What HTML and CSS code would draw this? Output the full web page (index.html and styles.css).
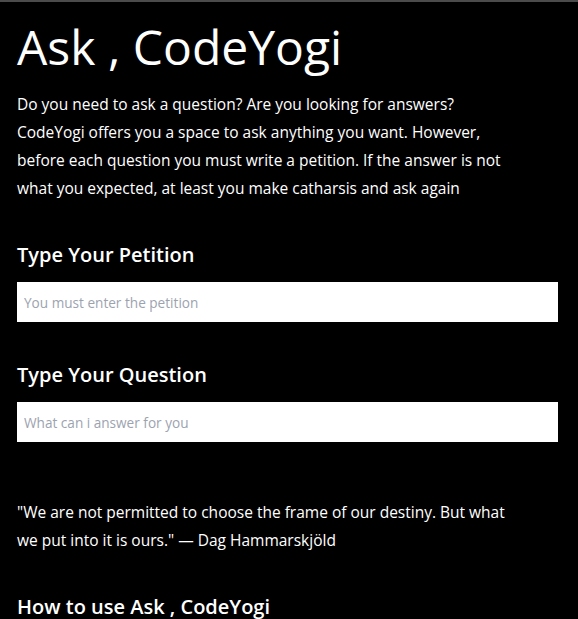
FILE: index.html
```html
<!DOCTYPE html>
<html lang="en">
<head>
<meta charset="utf-8">
<title>Ask , CodeYogi</title>
<link rel="stylesheet" href="styles.css">
</head>
<body>
<main class="page">
  <h1 class="title">Ask , CodeYogi</h1>
  <p class="text intro">Do you need to ask a question? Are you looking for answers? CodeYogi offers you a space to ask anything you want. However, before each question you must write a petition. If the answer is not what you expected, at least you make catharsis and ask again</p>
  <section class="field">
    <h2 class="label">Type Your Petition</h2>
    <input class="input" type="text" placeholder="You must enter the petition">
  </section>
  <section class="field">
    <h2 class="label">Type Your Question</h2>
    <input class="input" type="text" placeholder="What can i answer for you">
  </section>
  <p class="text quote">"We are not permitted to choose the frame of our destiny. But what we put into it is ours." — Dag Hammarskjöld</p>
  <h2 class="label">How to use Ask , CodeYogi</h2>
</main>
</body>
</html>
```
FILE: styles.css
```css
html, body {
  margin: 0;
  padding: 0;
  background: #000;
}
body {
  border-top: 2px solid #4b4b4b;
  font-family: "Open Sans", "Noto Sans", sans-serif;
  color: #fff;
}
.page {
  padding: 0 20px 0 17px;
  display: flex;
  flex-direction: column;
}
.title {
  margin: 13px 0 0;
  font-size: 48px;
  font-weight: 500;
  line-height: 64px;
}
.text {
  max-width: 498px;
  font-size: 15.5px;
  line-height: 28px;
}
.intro {
  margin: 11px 0 0;
}
.field {
  display: flex;
  flex-direction: column;
}
.label {
  margin: 39px 0 0;
  font-size: 20px;
  font-weight: 600;
  line-height: 28px;
}
.input {
  margin-top: 13px;
  height: 40px;
  box-sizing: border-box;
  border: 0;
  background: #fff;
  padding: 0 7px;
  font-family: inherit;
  font-size: 13.6px;
  color: #000;
  outline: none;
}
.input::placeholder {
  color: #9ca3af;
}
.quote {
  margin: 56px 0 0;
}
```
